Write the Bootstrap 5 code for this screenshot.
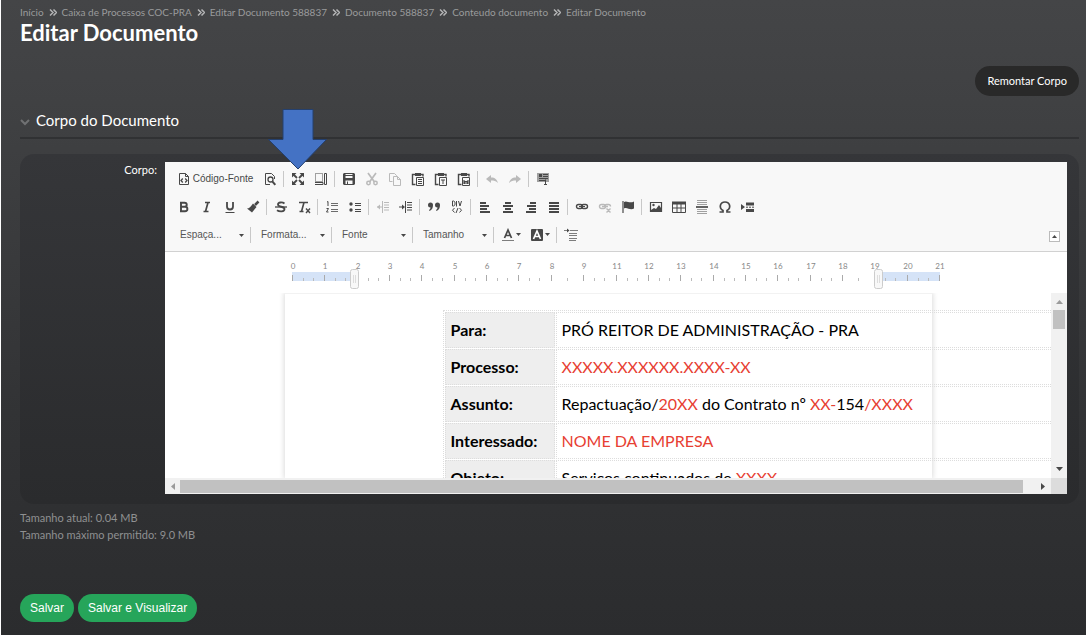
<!DOCTYPE html>
<html lang="pt-BR">
<head>
<meta charset="utf-8">
<meta name="viewport" content="width=device-width, initial-scale=1">
<title>Editar Documento</title>
<link href="https://cdn.jsdelivr.net/npm/bootstrap@5.3.0/dist/css/bootstrap.min.css" rel="stylesheet">
<style>
body{background:#fff;font-family:Lato,sans-serif;font-size:11px;line-height:16px;color:#fff}
.page{margin:0 1px;padding:4px 7px 13px 19px;min-height:100vh;background:linear-gradient(#444547 0,#3f4042 20%,#323335 65%,#2b2c2e 100%)}
.crumbs{font-size:10px;line-height:16px}
.crumbs a{color:#9a9b9c;text-decoration:none}
.crumbs svg{width:8px;height:7px;margin:0 5px 0 5px;vertical-align:baseline;stroke:#b4b5b6;stroke-width:1.5;fill:none}
h1{font-size:22px;line-height:26px;font-weight:700;margin:0 0 20px}
.btn{--bs-btn-font-size:12px;--bs-btn-line-height:16px;--bs-btn-border-width:0;--bs-btn-border-radius:16px}
.btn-dark{--bs-btn-font-size:11px;--bs-btn-bg:#292929;--bs-btn-padding-x:12px;--bs-btn-padding-y:7px;margin-bottom:12px}
.btn-success{--bs-btn-bg:#26a55a;--bs-btn-padding-x:10px;--bs-btn-padding-y:6px;font-family:"Liberation Sans",sans-serif}
h2{font-size:15px;line-height:24px;font-weight:400;margin:0;padding-bottom:5px;border-bottom:2px solid #303133}
h2 svg{width:10px;height:7px;margin-right:6px;stroke:#707173;stroke-width:2;fill:none}
.panel{margin-top:15px;padding:8px 12px 10px 0;border-radius:14px;background:linear-gradient(#353639,#2a2b2d)}
.panel-label{width:137px;margin-right:8px;text-align:right}
.editor{position:relative;min-width:0;background:#fff;color:#484848;border:0;font-family:"Liberation Sans",sans-serif}
.pointer{position:absolute;left:102px;top:-54px;width:61px;height:63px;pointer-events:none;z-index:2}
.tools{background:#f8f8f8;border-bottom:1px solid #d1d1d1;padding:3px 7px 2px}
.tool-row{height:28px}
.tool{border:0;background:none;padding:0;width:23px;height:24px;display:flex;align-items:center;justify-content:center;color:#484848;font-size:10px}
.tool svg{width:14px;height:14px;fill:none;stroke:currentColor;stroke-width:1;flex:none}
.tool.wide{width:86px;gap:2px}
.tool.split{width:29px;gap:1px}
.tool.split .caret{width:5px;height:4px}
.tool:disabled{opacity:.35}
.sep{width:1px;height:16px;background:#c8c8c8;margin:0 2px;flex:none}
.combo{appearance:none;width:76px;height:24px;border:0;border-radius:0;padding:0 16px 0 8px;color:#555;font-size:10px;background:url("data:image/svg+xml,%3Csvg xmlns='http://www.w3.org/2000/svg' width='5' height='3'%3E%3Cpath d='M0 0h5L2.5 3z' fill='%23484848'/%3E%3C/svg%3E") no-repeat right 4px center}
.f{fill:currentColor;stroke:none}
.collapse-btn{position:absolute;right:7px;bottom:9px;width:11px;height:11px;border:1px solid #bbb;background:#fff;padding:0;display:flex;align-items:center;justify-content:center}
.collapse-btn svg{width:5px;height:3px;fill:#484848}
.ruler-wrap{height:41px;padding-top:9px}
.ruler{position:relative;width:648px;max-width:100%;margin:0 auto}
.ruler svg{display:block;width:100%;height:30px;overflow:visible;font:8px Lato,sans-serif}
.viewer{height:185px;background:#fff}
.canvas-area{min-width:0;overflow:hidden;position:relative}
.sheet{width:647px;height:185px;margin:0 auto;padding:16px 0 0 158px;box-shadow:0 0 5px 1px #ddd;border-top:1px solid #f2f2f2}
.doc{width:780px;table-layout:fixed;border-collapse:separate;border-spacing:1px;border:1px dotted #ddd;font-family:Lato,sans-serif;font-size:16px;line-height:24px;color:#000}
.doc th,.doc td{height:36px;padding:5px;border:1px dotted #ddd;font-weight:400;white-space:nowrap}
.doc th{width:110px;background:#eee;font-weight:700}
.doc span{color:#e74033}
.vbar{width:16px;background:#f1f1f1;padding:6px 0 6px}
.hbar{height:16px;background:#f1f1f1}
.vbar svg,.hbar svg{width:7px;height:7px;fill:#484848;flex:none}
.vthumb{width:12px;height:19px;margin-top:4px;background:#c1c1c1}
.hthumb{flex:1;height:13px;margin:0 16px 0 4px;background:#c1c1c1}
.corner{width:16px;height:16px;background:#dcdcdc;margin-left:5px}
.sizes{margin:5px 0 51px;color:#8f9091;line-height:17px}
</style>
</head>
<body>
<svg class="d-none">
<symbol id="gt" viewBox="0 0 8 7"><path d="M1 .5l3 3-3 3M4.500 .5l3 3-3 3"/></symbol>
<symbol id="page" viewBox="0 0 14 14"><path d="M2.500 1.500h6l3 3v8h-9zM8.500 1.500v3h3"/></symbol>
<symbol id="clip" viewBox="0 0 14 14"><path d="M4 2.500H1.500v10h3M10 2.500h2v2" stroke-width="1.400"/><path d="M4 1h6v3H4z" class="f"/><path d="M5.500 5.500h7v8h-7z"/></symbol>
</svg>
<main class="page">
<nav class="crumbs" aria-label="Trilha"><a href="#">Início</a><svg><use href="#gt"/></svg><a href="#">Caixa de Processos COC-PRA</a><svg><use href="#gt"/></svg><a href="#">Editar Documento 588837</a><svg><use href="#gt"/></svg><a href="#">Documento 588837</a><svg><use href="#gt"/></svg><a href="#">Conteudo documento</a><svg><use href="#gt"/></svg><a href="#">Editar Documento</a></nav>
<h1>Editar Documento</h1>
<div class="d-flex justify-content-end"><button type="button" class="btn btn-dark">Remontar Corpo</button></div>
<h2><svg viewBox="0 0 10 7"><path d="M1 1l4 4 4-4"/></svg>Corpo do Documento</h2>
<section class="panel d-flex align-items-start">
<div class="panel-label" id="lbl">Corpo:</div>
<div class="editor flex-grow-1" role="group" aria-labelledby="lbl">
<svg class="pointer" viewBox="0 0 61 63"><path d="M16 1.500h30v30h13.500L31 61 1.500 31.500H16z" fill="#4472c4" stroke="#24406f"/></svg>
<div class="tools position-relative">
<div class="tool-row d-flex align-items-center">
<button class="tool wide" type="button"><svg viewBox="0 0 14 14"><use href="#page"/><path d="M5.800 6.500l-1.800 2 1.800 2M8.200 6.500l1.800 2-1.800 2" stroke-width="1.300"/></svg>Código-Fonte</button>
<button class="tool" type="button" aria-label="Visualizar"><svg viewBox="0 0 14 14"><path d="M11.500 7V4.500l-3-3h-6v11H7"/><circle cx="7.500" cy="7.500" r="2.500" stroke-width="1.300"/><path d="M9.300 9.300l3 3.500" stroke-width="2"/></svg></button>
<span class="sep"></span>
<button class="tool" type="button" aria-label="Maximizar"><svg viewBox="0 0 14 14"><path class="f" d="M1 1h4.500L1 5.500zM13 1v4.500L8.500 1zM1 13V8.500L5.500 13zM13 13H8.500L13 8.500z"/><path d="M2 2l4 4M12 2L8 6M2 12l4-4M12 12L8 8" stroke-width="1.800"/></svg></button>
<button class="tool" type="button" aria-label="Mostrar blocos"><svg viewBox="0 0 14 14"><path d="M1.500 1.500h7v8h-7z" stroke-dasharray="1 1"/><path d="M10.500 1.500h2v11h-2zM1 12.500h8v-2H1"/></svg></button>
<span class="sep"></span>
<button class="tool" type="button" aria-label="Salvar documento"><svg viewBox="0 0 14 14"><path class="f" fill-rule="evenodd" d="M2 1h10l1 1v10l-1 1H2l-1-1V2zM3.500 2v4h7V2zM3.500 8.500v3.500H5V9.500h1V12h4.500V8.500z"/><path d="M3 3.500h8"/></svg></button>
<button class="tool" type="button" aria-label="Recortar" disabled><svg viewBox="0 0 14 14"><path d="M3 1l6.500 9M11 1L4.500 10" stroke-width="1.700"/><circle cx="3.500" cy="11" r="1.700" stroke-width="1.500"/><circle cx="10.500" cy="11" r="1.700" stroke-width="1.500"/></svg></button>
<button class="tool" type="button" aria-label="Copiar" disabled><svg viewBox="0 0 14 14"><path d="M4.500 9.500h-3v-8h5l2 2v1M5.500 4.500h4l3 3v6h-7zM9.500 4.500v3h3"/></svg></button>
<button class="tool" type="button" aria-label="Colar"><svg viewBox="0 0 14 14"><use href="#clip"/><path d="M7 7.500h4M7 9.500h4M7 11.500h4"/></svg></button>
<button class="tool" type="button" aria-label="Colar como texto"><svg viewBox="0 0 14 14"><use href="#clip"/><path d="M7 8h4M9 8v4"/></svg></button>
<button class="tool" type="button" aria-label="Colar do Word"><svg viewBox="0 0 14 14"><use href="#clip"/><path d="M7 8v3.500h1V9.500h2v2h1V8" stroke-width="1.200"/></svg></button>
<span class="sep"></span>
<button class="tool" type="button" aria-label="Desfazer" disabled><svg viewBox="0 0 14 14"><path class="f" d="M1 7l5-4v2.500c4 0 6 2 7 5.500-2-2-4-2.500-7-2.500V11z"/></svg></button>
<button class="tool" type="button" aria-label="Refazer" disabled><svg viewBox="0 0 14 14"><path class="f" d="M13 7L8 3v2.500c-4 0-6 2-7 5.500 2-2 4-2.500 7-2.500V11z"/></svg></button>
<span class="sep"></span>
<button class="tool" type="button" aria-label="Modelo"><svg viewBox="0 0 14 14"><path class="f" d="M1 1h12v9H1z" opacity=".5"/><path class="f" d="M3 2h3v3H3z"/><path d="M7 2.500h5M7 4.500h5M3 6.500h9M3 8.500h6" /><path d="M9.500 7.500v5M8 12.500h3"/></svg></button>
</div>
<div class="tool-row d-flex align-items-center">
<button class="tool" type="button" aria-label="Negrito"><svg viewBox="0 0 14 14"><path d="M4 2.500v9M3 2.800h4.500c3 0 3 4 0 4H4h4c3.200 0 3.200 4.400 0 4.400H3" stroke-width="1.900"/></svg></button>
<button class="tool" type="button" aria-label="Itálico"><svg viewBox="0 0 14 14"><path d="M5 2.500h5M3.500 11.500h5M8 2.500l-2.500 9" stroke-width="1.700"/></svg></button>
<button class="tool" type="button" aria-label="Sublinhado"><svg viewBox="0 0 14 14"><path d="M4 2v4.500c0 4 6 4 6 0V2" stroke-width="1.800"/><path d="M2.500 12.500h9"/></svg></button>
<button class="tool" type="button" aria-label="Copiar formatação"><svg viewBox="0 0 14 14"><path d="M12.500 1.500L9 5" stroke-width="2.500"/><path class="f" d="M7 3.500L10.500 7 6 12.500 1 8.500c2 0 4-2 6-5z"/></svg></button>
<span class="sep"></span>
<button class="tool" type="button" aria-label="Tachado"><svg viewBox="0 0 14 14"><path d="M10.500 3.500C8.500 2 4 2 4 4.500c0 3 6.500 1.500 6.500 4.500 0 3-5 3-7.500 1.200" stroke-width="1.800"/><path d="M1 7h12" stroke-width="1.300"/></svg></button>
<button class="tool" type="button" aria-label="Remover formatação"><svg viewBox="0 0 14 14"><path d="M2 2.500h9M7 2.500l-2.500 9M2.500 11.500h4" stroke-width="1.600"/><path d="M9 8.500l4 4.500M13 8.500L9 13" stroke-width="1.400"/></svg></button>
<span class="sep"></span>
<button class="tool" type="button" aria-label="Lista numerada"><svg viewBox="0 0 14 14"><path d="M2 2l1-.5V6M1.500 8.500h2l-2 3.500h2"/><path d="M6 3.500h7M6 5.500h7M6 9.500h7M6 11.500h7" opacity=".8"/></svg></button>
<button class="tool" type="button" aria-label="Lista com marcadores"><svg viewBox="0 0 14 14"><circle class="f" cx="3" cy="4" r="1.700"/><circle class="f" cx="3" cy="10" r="1.700"/><path d="M7 3.500h6M7 5.500h6M7 9.500h6M7 11.500h6"/></svg></button>
<span class="sep"></span>
<button class="tool" type="button" aria-label="Diminuir recuo" disabled><svg viewBox="0 0 14 14"><path d="M6.500 1v12M8 2.500h5M8 5h5M8 7.500h5M8 10h5M1 7h5" /><path class="f" d="M1 7l3-2.500v5z"/></svg></button>
<button class="tool" type="button" aria-label="Aumentar recuo"><svg viewBox="0 0 14 14"><path d="M6.500 1v12M8 2.500h5M8 5h5M8 7.500h5M8 10h5M0 7h5" /><path class="f" d="M6 7L3 4.500v5z"/></svg></button>
<span class="sep"></span>
<button class="tool" type="button" aria-label="Citação"><svg viewBox="0 0 14 14"><path class="f" d="M1 5a2.500 2.500 0 0 1 5 0c0 3-1 5-3.500 6L2 10c1-.7 1.500-1.500 1.500-2.500A2.500 2.500 0 0 1 1 5zM8 5a2.500 2.500 0 0 1 5 0c0 3-1 5-3.500 6L9 10c1-.7 1.500-1.500 1.500-2.500A2.500 2.500 0 0 1 8 5z"/></svg></button>
<button class="tool" type="button" aria-label="Bloco DIV"><svg viewBox="0 0 14 14"><path d="M2.500 1v5h1L5 4.800V2.200L3.500 1zM6.500 1v5.500M8.500 1L10 6l1.500-5M4.500 8l-2 2.200 2 2.300M9.500 8l2 2.200-2 2.300M8 8l-2 5"/></svg></button>
<span class="sep"></span>
<button class="tool" type="button" aria-label="Alinhar à esquerda"><svg viewBox="0 0 14 14"><path d="M2 3h6M2 6h9M2 9h7M2 12h10" stroke-width="1.800"/></svg></button>
<button class="tool" type="button" aria-label="Centralizar"><svg viewBox="0 0 14 14"><path d="M4 3h6M2 6h10M4 9h6M2 12h10" stroke-width="1.800"/></svg></button>
<button class="tool" type="button" aria-label="Alinhar à direita"><svg viewBox="0 0 14 14"><path d="M6 3h6M3 6h9M5 9h7M2 12h10" stroke-width="1.800"/></svg></button>
<button class="tool" type="button" aria-label="Justificar"><svg viewBox="0 0 14 14"><path d="M2 3h10M2 6h10M2 9h10M2 12h10" stroke-width="1.800"/></svg></button>
<span class="sep"></span>
<button class="tool" type="button" aria-label="Link"><svg viewBox="0 0 14 14"><rect x="1.500" y="4.500" width="6" height="4" rx="2" stroke-width="1.400"/><rect x="6.500" y="4.500" width="6" height="4" rx="2" stroke-width="1.400"/><path d="M4 6.500h6"/></svg></button>
<button class="tool" type="button" aria-label="Remover link" disabled><svg viewBox="0 0 14 14"><rect x="1.500" y="4.500" width="6" height="4" rx="2" stroke-width="1.400"/><path d="M6.500 7V6a2 2 0 0 1 2-1.500h2a2 2 0 0 1 2 2M4 6.500h6M8.500 8.500l4 4M12.500 8.500l-4 4" stroke-width="1.400"/></svg></button>
<button class="tool" type="button" aria-label="Âncora"><svg viewBox="0 0 14 14"><path d="M2 1v12" stroke-width="1.200"/><path class="f" d="M3 2c3-2 5 2 10-.5v7C9 11 6 6.500 3 8.500z"/></svg></button>
<span class="sep"></span>
<button class="tool" type="button" aria-label="Imagem"><svg viewBox="0 0 14 14"><path d="M1.500 2.500h11v9h-11z" stroke-width="1.200"/><path class="f" d="M2 10l3-2 2 1 3-4 2 3v3.500H2z"/><circle class="f" cx="4.500" cy="5" r="1.200"/></svg></button>
<button class="tool" type="button" aria-label="Tabela"><svg viewBox="0 0 14 14"><path class="f" d="M0 1.500h14v3H0z"/><path d="M.5 2v10.500h13V2M.5 8h13M5 4v8M9 4v8"/></svg></button>
<button class="tool" type="button" aria-label="Linha horizontal"><svg viewBox="0 0 14 14"><path d="M2 .5h10M2 2.500h10M2 4.500h10M2 9.500h10M2 11.500h10M2 13.500h10" opacity=".5"/><path d="M1 7h12" stroke-width="1.700"/></svg></button>
<button class="tool" type="button" aria-label="Caractere especial"><svg viewBox="0 0 14 14"><path d="M1.500 12H5v-1.500C.5 8 2 2 7 2s6.500 6 2 8.500V12h3.500" stroke-width="1.700"/></svg></button>
<button class="tool" type="button" aria-label="Quebra de página"><svg viewBox="0 0 14 14"><path class="f" d="M0 4l4 3-4 3zM5 2.500h8v3H5zM5 9h8v3H5z"/><path d="M5 7.200h8" stroke-dasharray="2 1"/></svg></button>
</div>
<div class="tool-row d-flex align-items-center">
<select class="combo" aria-label="Espaçamento"><option>Espaça...</option></select><span class="sep"></span>
<select class="combo" aria-label="Formatação"><option>Formata...</option></select><span class="sep"></span>
<select class="combo" aria-label="Fonte"><option>Fonte</option></select><span class="sep"></span>
<select class="combo" aria-label="Tamanho"><option>Tamanho</option></select><span class="sep"></span>
<button class="tool split" type="button" aria-label="Cor do texto"><svg viewBox="0 0 14 14"><path d="M3.500 10L7 2l3.500 8M4.500 7.500h5" stroke-width="1.700"/><path d="M1 12.500h12" opacity=".7"/></svg><svg class="caret" viewBox="0 0 5 4"><path class="f" d="M0 0h5L2.500 3z"/></svg></button>
<button class="tool split" type="button" aria-label="Cor de fundo"><svg viewBox="0 0 14 14"><rect class="f" x="1" y="1" width="12" height="12" rx="1"/><path d="M3.500 11L7 3l3.500 8M4.500 8.500h5" stroke="#fff" stroke-width="1.700"/></svg><svg class="caret" viewBox="0 0 5 4"><path class="f" d="M0 0h5L2.500 3z"/></svg></button>
<span class="sep"></span>
<button class="tool" type="button" aria-label="Recuo da primeira linha"><svg viewBox="0 0 14 14"><path d="M0 2.500h5M6 2.500h8M5 5.500h8M5 7.500h8M5 10.500h8M5 12.500h7" opacity=".7"/><path class="f" d="M5.500 2.500L3 .5v4z"/></svg></button>
</div>
<button class="collapse-btn" type="button" aria-label="Recolher"><svg viewBox="0 0 5 3"><path d="M0 3h5L2.500 0z"/></svg></button>
</div>
<div class="ruler-wrap"><div class="ruler"><svg viewBox="0 0 648 30" id="ruler" role="img" aria-label="Régua"></svg></div></div>
<div class="viewer d-flex">
<div class="canvas-area flex-grow-1"><div class="sheet">
<table class="doc">
<tr><th scope="row">Para:</th><td>PRÓ REITOR DE ADMINISTRAÇÃO - PRA</td></tr>
<tr><th scope="row">Processo:</th><td><span>XXXXX.XXXXXX.XXXX-XX</span></td></tr>
<tr><th scope="row">Assunto:</th><td>Repactuação/<span>20XX</span> do Contrato nº <span>XX-</span>154<span>/XXXX</span></td></tr>
<tr><th scope="row">Interessado:</th><td><span>NOME DA EMPRESA</span></td></tr>
<tr><th scope="row">Objeto:</th><td>Serviços continuados de <span>XXXX</span></td></tr>
</table></div></div>
<div class="vbar d-flex flex-column align-items-center"><svg viewBox="0 0 7 7" opacity=".5"><path d="M0 5h7L3.500 1z"/></svg><div class="vthumb"></div><svg class="mt-auto" viewBox="0 0 7 7"><path d="M0 2h7L3.500 6z"/></svg></div>
</div>
<div class="hbar d-flex align-items-center"><svg class="ms-1" viewBox="0 0 7 7" opacity=".5"><path d="M6 0v7L2 3.500z"/></svg><div class="hthumb"></div><svg viewBox="0 0 7 7"><path d="M2 0v7l4-3.500z"/></svg><div class="corner"></div></div>
</div>
</section>
<div class="sizes"><div>Tamanho atual: 0.04 MB</div><div>Tamanho máximo permitido: 9.0 MB</div></div>
<div class="d-flex gap-1"><button class="btn btn-success" type="button">Salvar</button><button class="btn btn-success" type="button">Salvar e Visualizar</button></div>
</main>
<script>
// Ruler: one labelled tick per unit, two minor ticks between.
const labels = [0,1,2,3,4,5,6,7,8,9,11,12,13,14,15,16,17,18,19,20,21];
let out = '<path d="M0 11h62v9H0zM586 11h62v9h-62z" fill="#d5e3f7"/>';
labels.forEach((n, i) => {
  const x = Math.round(i * 32.35);
  out += `<text x="${x + 1}" y="8" text-anchor="middle" fill="#888">${n}</text><path d="M${x + .5} 14v6" stroke="#aaa"/>`;
  if (i === 20) return;
  const minor = n === 8 || n === 18 ? [16] : [11, 21];
  minor.forEach(m => out += `<path d="M${x + m + .5} 17v3" stroke="#bbb"/>`);
});
[58, 582].forEach(x => out += `<rect x="${x + .5}" y="8.500" width="8" height="19" rx="2" fill="#f8f8f8" stroke="#ccc"/><path d="M${x + 3.5} 14v8M${x + 5.5} 14v8" stroke="#ddd"/>`);
document.getElementById('ruler').innerHTML = out;
</script>
<script src="https://cdn.jsdelivr.net/npm/bootstrap@5.3.0/dist/js/bootstrap.bundle.min.js"></script>
</body>
</html>
